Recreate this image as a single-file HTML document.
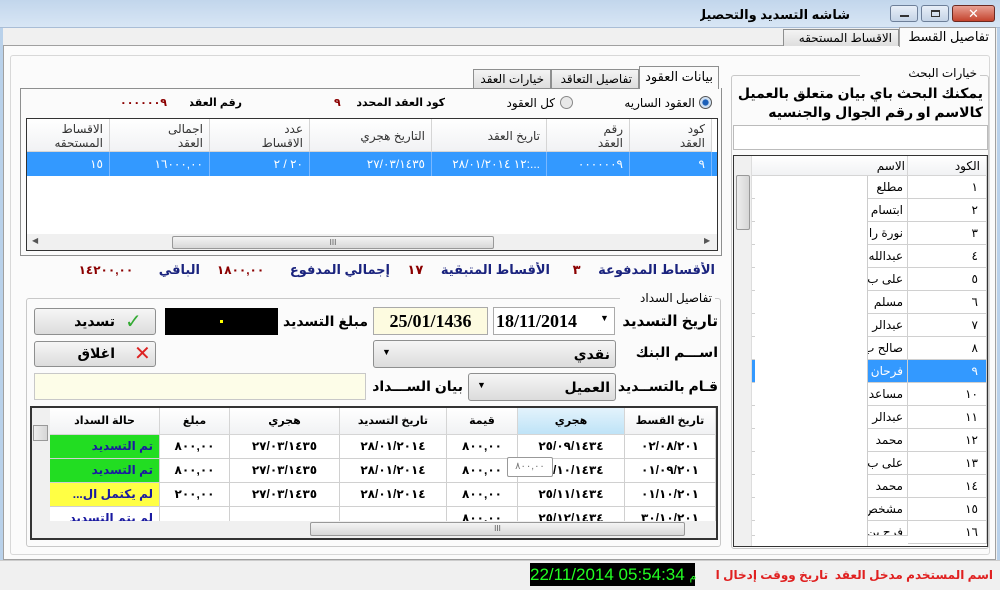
<!DOCTYPE html>
<html><head><meta charset="utf-8"><style>
*{margin:0;padding:0;box-sizing:border-box}
body{width:1000px;height:590px;position:relative;overflow:hidden;background:#f0f0f0;font-family:"Liberation Sans","DejaVu Sans",sans-serif;font-size:12px;color:#000}
.a{position:absolute}
.r{direction:rtl;text-align:right;white-space:nowrap;overflow:hidden}
.c{text-align:center;white-space:nowrap;overflow:hidden}
.b{font-weight:bold}
.grid{background:#fff;border:1px solid #333}
.hd{background:linear-gradient(#fff,#f1f2f4);border-right:1px solid #d5d5d5;border-bottom:1px solid #d5d5d5}
.cell{border-right:1px solid #d0d0d0;border-bottom:1px solid #d0d0d0;background:#fff}
.btn{background:linear-gradient(#f6f6f6,#dcdcdc);border:1px solid #8e8f8f;border-radius:3px}
.tab{background:linear-gradient(#f4f4f4,#dedede);border:1px solid #8e8f8f;border-bottom:none}
</style></head><body>
<div class="a" style="left:0;top:0;width:1000px;height:590px;border:3px solid #b9d1ea;border-top:none"></div>
<!-- title bar -->
<div class="a" style="left:0;top:0;width:1000px;height:28px;background:linear-gradient(#c2d6ec,#d8e6f5);border-bottom:1px solid #a9bdd6"></div>
<div class="a r b" style="left:700px;top:7px;width:150px;font-size:13px">شاشه التسديد والتحصيل</div>
<div class="a" style="left:890px;top:5px;width:28px;height:17px;border:1px solid #6d7f99;border-radius:3px;background:linear-gradient(#e8eff8,#c4d3e6)"><div class="a" style="left:9px;top:9px;width:9px;height:2px;background:#333"></div></div>
<div class="a" style="left:921px;top:5px;width:28px;height:17px;border:1px solid #6d7f99;border-radius:3px;background:linear-gradient(#e8eff8,#c4d3e6)"><div class="a" style="left:9px;top:4px;width:9px;height:7px;border:1px solid #333;border-top-width:2px"></div></div>
<div class="a c b" style="left:952px;top:5px;width:43px;height:17px;border:1px solid #6b2a22;border-radius:3px;background:linear-gradient(#e8a093,#c4432d);color:#fff;font-size:13px;line-height:15px">✕</div>
<!-- main tabs -->
<div class="a" style="left:3px;top:45px;width:993px;height:515px;border:1px solid #a0a0a0;background:#fbfbfb"></div>
<div class="a tab r" style="left:783px;top:29px;width:116px;height:17px;padding-right:6px;line-height:16px">الاقساط المستحقه</div>
<div class="a r" style="left:899px;top:27px;width:97px;height:20px;background:#fbfbfb;border:1px solid #a0a0a0;border-bottom:none;padding-right:6px;line-height:18px;font-size:13px">تفاصيل القسط</div>
<div class="a" style="left:10px;top:55px;width:980px;height:500px;border:1px solid #d8d8d8;border-radius:3px"></div>
<!-- search group -->
<div class="a" style="left:731px;top:75px;width:258px;height:474px;border:1px solid #c8c8c8;border-radius:3px"></div>
<div class="a r" style="left:860px;top:66px;width:120px;background:#fbfbfb;padding:0 3px">خيارات البحث</div>
<div class="a r b" style="left:735px;top:84px;width:248px;font-size:14px;line-height:19px">يمكنك البحث باي بيان متعلق بالعميل<br>كالاسم او رقم الجوال والجنسيه</div>
<div class="a" style="left:733px;top:125px;width:255px;height:25px;background:#fff;border:1px solid #bbb"></div>
<div class="a grid" style="left:733px;top:155px;width:255px;height:392px"></div>
<div class="a" style="left:734px;top:156px;width:18px;height:390px;background:#f0f0f0;border-right:1px solid #ddd"></div>
<div class="a" style="left:736px;top:175px;width:14px;height:55px;background:linear-gradient(90deg,#eee,#d6d6d6);border:1px solid #999;border-radius:2px"></div>
<div class="a hd" style="left:752px;top:156px;width:156px;height:20px"></div>
<div class="a hd" style="left:908px;top:156px;width:79px;height:20px"></div>
<div class="a r" style="left:870px;top:159px;width:35px">الاسم</div>
<div class="a r" style="left:920px;top:159px;width:60px">الكود</div>
<!-- contract tabs -->
<div class="a tab r" style="left:473px;top:69px;width:78px;height:19px;padding-right:6px;line-height:18px">خيارات العقد</div>
<div class="a tab r" style="left:551px;top:69px;width:88px;height:19px;padding-right:6px;line-height:18px">تفاصيل التعاقد</div>
<div class="a r" style="left:639px;top:66px;width:80px;height:23px;background:#fbfbfb;border:1px solid #8e8f8f;border-bottom:none;padding-right:5px;line-height:20px;font-size:13px">بيانات العقود</div>
<div class="a" style="left:20px;top:88px;width:702px;height:168px;border:1px solid #8e8f8f;border-top:none"></div>
<div class="a" style="left:20px;top:88px;width:619px;height:1px;background:#8e8f8f"></div>
<div class="a" style="left:699px;top:96px;width:13px;height:13px;border-radius:50%;border:1px solid #555;background:radial-gradient(#1b5fb8 35%,#cfe0f3 45%)"></div>
<div class="a r" style="left:600px;top:96px;width:95px">العقود الساريه</div>
<div class="a" style="left:560px;top:96px;width:13px;height:13px;border-radius:50%;border:1px solid #888;background:#e8e8e8"></div>
<div class="a r" style="left:490px;top:96px;width:65px">كل العقود</div>
<div class="a r b" style="left:355px;top:96px;width:90px;font-size:11px">كود العقد المحدد</div>
<div class="a b" style="left:334px;top:96px;color:#8b0000;font-size:11px">٩</div>
<div class="a r b" style="left:190px;top:96px;width:52px;font-size:11px">رقم العقد</div>
<div class="a b" style="left:120px;top:96px;color:#8b0000;font-size:11px;letter-spacing:1px">٠٠٠٠٠٠٩</div>
<div class="a grid" style="left:26px;top:118px;width:692px;height:133px"></div>
<div class="a" style="left:27px;top:234px;width:690px;height:16px;background:#f0f0f0"></div>
<div class="a" style="left:172px;top:236px;width:322px;height:13px;background:linear-gradient(#f4f4f4,#d8d8d8);border:1px solid #999;border-radius:2px;font-size:8px;text-align:center;line-height:11px;color:#555">III</div>
<div class="a" style="left:32px;top:236px;font-size:8px;color:#555">◀</div>
<div class="a" style="left:704px;top:236px;font-size:8px;color:#555">▶</div>
<div class="a r b" style="left:530px;top:262px;width:185px;color:#1a237e;font-size:13px">الأقساط المدفوعة <span style="color:#8b0000;margin:0 14px">٣</span></div>
<div class="a r b" style="left:400px;top:262px;width:150px;color:#1a237e;font-size:13px">الأقساط المتبقية <span style="color:#8b0000;margin:0 14px">١٧</span></div>
<div class="a r b" style="left:200px;top:262px;width:190px;color:#1a237e;font-size:13px">إجمالي المدفوع <span style="color:#8b0000;margin:0 22px;font-size:12px">١٨٠٠,٠٠</span></div>
<div class="a r b" style="left:40px;top:262px;width:160px;color:#1a237e;font-size:13px">الباقي <span style="color:#8b0000;margin:0 22px;font-size:12px">١٤٢٠٠,٠٠</span></div>
<!-- payment group -->
<div class="a" style="left:26px;top:298px;width:695px;height:249px;border:1px solid #c8c8c8;border-radius:3px"></div>
<div class="a r" style="left:620px;top:291px;width:95px;background:#fbfbfb;padding:0 3px">تفاصيل السداد</div>
<div class="a r b" style="left:612px;top:312px;width:106px;font-size:15px">تاريخ التسديد</div>
<div class="a" style="left:493px;top:307px;width:122px;height:28px;background:#fff;border:1px solid #aaa"></div>
<div class="a b" style="left:496px;top:311px;font-family:'Liberation Serif',serif;font-size:18px">18/11/2014</div>
<div class="a" style="left:600px;top:313px;font-size:9px">▼</div>
<div class="a" style="left:373px;top:307px;width:115px;height:28px;background:#fdfbe0;border:1px solid #aaa"></div>
<div class="a b c" style="left:373px;top:311px;width:115px;font-family:'Liberation Serif',serif;font-size:18px">25/01/1436</div>
<div class="a r b" style="left:278px;top:313px;width:90px;font-size:14px">مبلغ التسديد</div>
<div class="a" style="left:165px;top:308px;width:113px;height:27px;background:#000"><div class="a" style="left:55px;top:12px;width:3px;height:3px;background:#ff0"></div></div>
<div class="a btn" style="left:34px;top:308px;width:122px;height:27px"></div>
<div class="a b" style="left:125px;top:309px;color:#3a3;font-size:20px">✓</div>
<div class="a r b" style="left:60px;top:313px;width:55px;font-size:14px">تسديد</div>
<div class="a r b" style="left:612px;top:344px;width:106px;font-size:14px">اســـم البنك</div>
<div class="a btn" style="left:373px;top:340px;width:243px;height:28px"></div>
<div class="a r b" style="left:540px;top:346px;width:70px;font-size:14px">نقدي</div>
<div class="a" style="left:382px;top:347px;font-size:9px">▼</div>
<div class="a btn" style="left:34px;top:341px;width:122px;height:26px"></div>
<div class="a b" style="left:134px;top:341px;color:#d22;font-size:20px">✕</div>
<div class="a r b" style="left:60px;top:345px;width:55px;font-size:14px">اغلاق</div>
<div class="a r b" style="left:612px;top:378px;width:106px;font-size:14px">قـام بالتســديد</div>
<div class="a btn" style="left:468px;top:373px;width:148px;height:28px"></div>
<div class="a r b" style="left:540px;top:379px;width:70px;font-size:14px">العميل</div>
<div class="a" style="left:477px;top:380px;font-size:9px">▼</div>
<div class="a r b" style="left:368px;top:378px;width:95px;font-size:14px;overflow:visible">بيان الســـداد</div>
<div class="a" style="left:34px;top:373px;width:332px;height:27px;background:#fdfde8;border:1px solid #c8c8c8"></div>
<div class="a grid" style="left:30px;top:406px;width:688px;height:134px;border-width:2px"></div>
<div class="a" style="left:32px;top:408px;width:18px;height:113px;background:#f0f0f0"></div>
<div class="a" style="left:33px;top:425px;width:15px;height:16px;background:linear-gradient(90deg,#eee,#d6d6d6);border:1px solid #999"></div>
<!-- status bar -->
<div class="a" style="left:0;top:560px;width:1000px;height:30px;background:#f0f0f0;border-top:1px solid #ccc"></div>
<div class="a" style="left:530px;top:563px;width:165px;height:23px;background:#000;color:#2f2;font-size:17px;line-height:23px;text-align:center;white-space:nowrap">22/11/2014 05:54:34 <span style="font-size:11px">م</span></div>
<div class="a r b" style="left:715px;top:568px;width:278px;color:#e02020;font-size:12px">اسم المستخدم مدخل العقد&nbsp; تاريخ ووقت إدخال العقد</div>
<script>
function el(h){var d=document.createElement('div');d.innerHTML=h;document.body.appendChild(d.firstChild)}
var names=['مطلع','ابتسام','نورة را','عبدالله','على ب','مسلم','عبدالر','صالح ب','فرحان','مساعد','عبدالر','محمد','على ب','محمد','مشخص','فرج بن'];
var dig='٠١٢٣٤٥٦٧٨٩';function ar(n){return String(n).replace(/\d/g,function(x){return dig[x]})}
for(var i=0;i<16;i++){var y=176+i*23;var sel=i==8;
el('<div class="a cell r" style="left:908px;top:'+y+'px;width:79px;height:23px;padding:4px 8px 0 0;'+(sel?'background:#3399ff;color:#fff':'')+'">'+ar(i+1)+'</div>');
el('<div class="a cell r" style="left:752px;top:'+y+'px;width:156px;height:'+(i==15?15:23)+'px;padding:4px 4px 0 0;'+(sel?'background:#3399ff;color:#fff':'')+'">'+names[i]+'</div>');}
el('<div class="a" style="left:755px;top:176px;width:113px;height:370px;background:#fff;border-right:1px solid #ccc"></div>');
var c1=[[630,82,'كود<br>العقد'],[547,83,'رقم<br>العقد'],[432,115,'تاريخ العقد'],[310,122,'التاريخ هجري'],[210,100,'عدد<br>الاقساط'],[110,100,'اجمالى<br>العقد'],[27,83,'الاقساط<br>المستحقه']];
var v1=['٩','٠٠٠٠٠٠٩','...:١٢ ٢٨/٠١/٢٠١٤','٢٧/٠٣/١٤٣٥','٢٠ / ٢','١٦٠٠٠,٠٠','١٥'];
c1.forEach(function(c,i){var one=c[2].indexOf('<br>')<0;
el('<div class="a hd r" style="left:'+c[0]+'px;top:119px;width:'+c[1]+'px;height:33px;padding:'+(one?10:3)+'px 6px 0 0;line-height:14px;color:#333">'+c[2]+'</div>');
el('<div class="a r" style="left:'+c[0]+'px;top:152px;width:'+c[1]+'px;height:24px;background:#3399ff;color:#fff;border-right:1px solid #7ab8ff;padding:5px 6px 0 0">'+v1[i]+'</div>');});
el('<div class="a" style="left:712px;top:152px;width:5px;height:24px;background:#3399ff"></div>');
var c2=[[625,91,'تاريخ القسط'],[518,107,'هجري'],[447,71,'قيمة'],[340,107,'تاريخ التسديد'],[230,110,'هجري'],[160,70,'مبلغ'],[50,110,'حالة السداد']];
var rows=[['٠٢/٠٨/٢٠١','٢٥/٠٩/١٤٣٤','٨٠٠,٠٠','٢٨/٠١/٢٠١٤','٢٧/٠٣/١٤٣٥','٨٠٠,٠٠','تم التسديد'],
['٠١/٠٩/٢٠١','٢٥/١٠/١٤٣٤','٨٠٠,٠٠','٢٨/٠١/٢٠١٤','٢٧/٠٣/١٤٣٥','٨٠٠,٠٠','تم التسديد'],
['٠١/١٠/٢٠١','٢٥/١١/١٤٣٤','٨٠٠,٠٠','٢٨/٠١/٢٠١٤','٢٧/٠٣/١٤٣٥','٢٠٠,٠٠','لم يكتمل ال...'],
['٣٠/١٠/٢٠١','٢٥/١٢/١٤٣٤','٨٠٠,٠٠','','','','لم يتم التسديد']];
c2.forEach(function(c,i){
el('<div class="a hd c" style="left:'+c[0]+'px;top:408px;width:'+c[1]+'px;height:27px;padding-top:6px;font-size:11px;font-weight:bold;'+(i==1?'background:linear-gradient(#e3f3fc,#bfe3f7);':'')+'">'+c[2]+'</div>');
rows.forEach(function(r,j){var y=435+j*24;var st='';
if(i==6){st=j<2?'background:#22dd22;color:#1a1aa0;':j==2?'background:#ffff44;color:#1a1aa0;':'color:#1a1aa0;';}
el('<div class="a cell '+(i==6?'r':'c')+' b" style="left:'+c[0]+'px;top:'+y+'px;width:'+c[1]+'px;height:'+(j==3?17:24)+'px;padding:'+(i==6?'4px 6px 0 0':'4px 0 0 0')+';font-size:12px;'+st+'">'+r[i]+'</div>');});});
el('<div class="a" style="left:32px;top:521px;width:684px;height:17px;background:#f0f0f0"></div>');
el('<div class="a" style="left:310px;top:522px;width:375px;height:14px;background:linear-gradient(#f4f4f4,#d8d8d8);border:1px solid #999;border-radius:2px;font-size:8px;text-align:center;line-height:12px;color:#555">III</div>');
el('<div class="a" style="left:507px;top:457px;width:46px;height:20px;background:#fff;border:1px solid #999;border-radius:2px;font-size:10px;color:#777;text-align:center;line-height:18px">٨٠٠,٠٠</div>');
</script>
</body></html>
